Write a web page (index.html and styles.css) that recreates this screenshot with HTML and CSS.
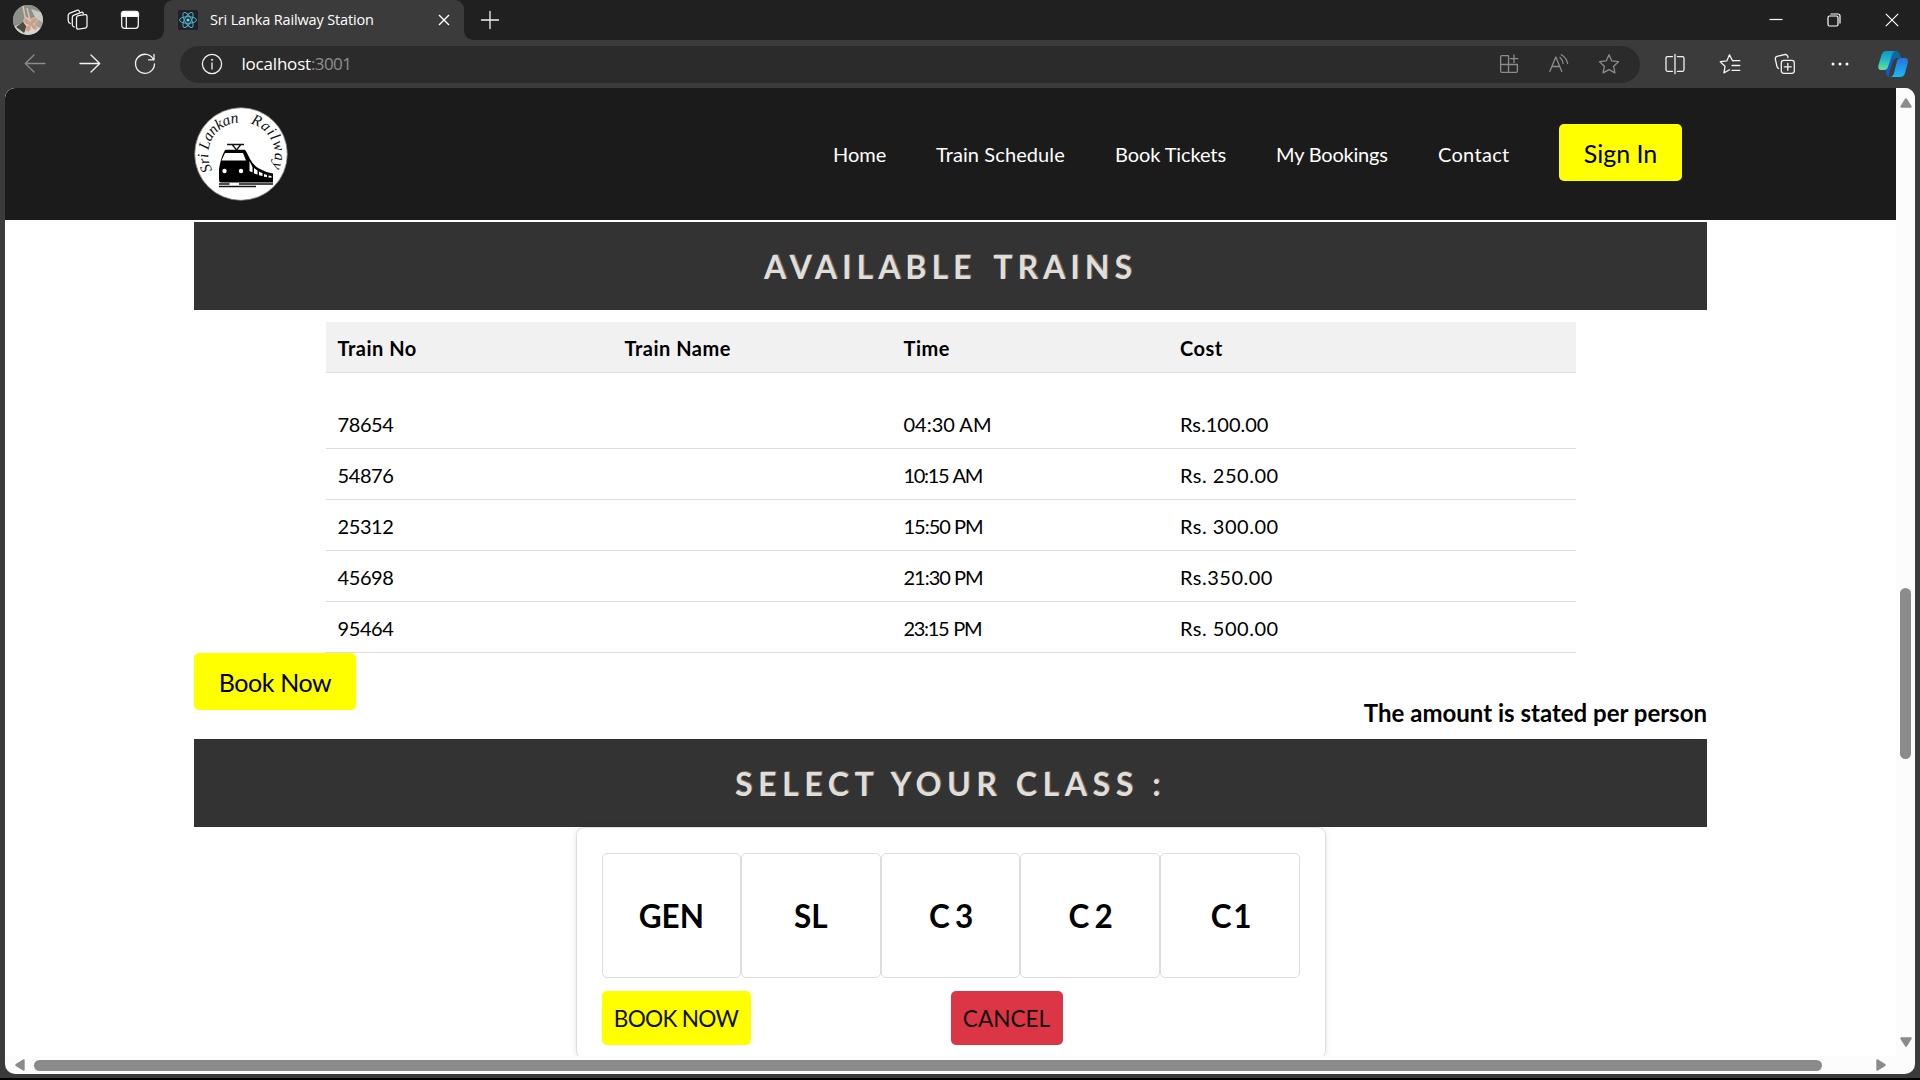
FILE: index.html
```html
<!DOCTYPE html>
<html lang="en">
<head>
<meta charset="utf-8">
<title>Sri Lanka Railway Station</title>
<link rel="stylesheet" href="styles.css">
</head>
<body>
<div class="tabstrip">
  <svg class="avatar" viewBox="0 0 30 30"><defs><clipPath id="face"><circle cx="15" cy="15" r="15"/></clipPath></defs><g clip-path="url(#face)"><rect width="30" height="30" fill="#a9a49a"/><path d="M0 8L10 0H30V10L18 13L6 24L0 20Z" fill="#8d9089"/><path d="M0 22L12 17L30 24V30H0Z" fill="#d8d5d0"/><path d="M18 4L30 8V18L22 12Z" fill="#c9c8c3"/><path d="M3 22L10 17L14 22L11 28Z" fill="#4c4a43"/><path d="M10 1L12 12L17 15L14 3" fill="none" stroke="#dcc3ae" stroke-width="1.5"/><path d="M17 17C13 11 10 13 11 17C12 19 14 20 16 20C12 22 12 26 15 27C18 26 18 23 18 21C20 25 23 26 24 24C25 21 22 20 20 19C24 18 26 15 24 13C21 12 18 14 17 17Z" fill="#c9a18a" stroke="#e3cbb9" stroke-width=".8"/></g></svg>
  <svg class="ico workspaces" viewBox="0 0 24 24"><rect x="10.5" y="7" width="10.5" height="13.5" rx="2" transform="skewY(-9) translate(0 2.6)"/><path d="M8.2 19L7.300 18.500Q6.300 18 6.300 16.500V9.500Q6.300 7.800 8 7.200L16 4.200Q17 4 17.300 5.500M4.400 15.500Q2.200 14.800 2.200 12.500V7.500Q2.200 5.800 3.900 5.100L11.500 2.200Q13 1.800 13.300 3.500"/></svg>
  <svg class="ico tabmenu" viewBox="0 0 24 24"><rect x="3.700" y="3.700" width="16.600" height="16.600" rx="3"/><path d="M3.500 5.500Q4 3.500 6 3.500H18Q20 3.500 20.500 5.500V8.300H3.500Z" fill="#fff"/><path d="M8.300 8V20"/></svg>
  <div class="tab">
    <svg class="react" viewBox="0 0 20 20"><rect width="20" height="20" rx="1.500" fill="#1f2126"/><g fill="none" stroke="#4fb3cb" stroke-width="1"><ellipse cx="10" cy="10" rx="8.500" ry="3.300"/><ellipse cx="10" cy="10" rx="8.500" ry="3.300" transform="rotate(60 10 10)"/><ellipse cx="10" cy="10" rx="8.500" ry="3.300" transform="rotate(120 10 10)"/></g><circle cx="10" cy="10" r="1.600" fill="#61dafb"/></svg>
    <span class="tab-title">Sri Lanka Railway Station</span>
    <svg class="tab-close" viewBox="0 0 12 12"><path d="M1 1L11 11M11 1L1 11"/></svg>
  </div>
  <svg class="ico newtab" viewBox="0 0 24 24"><path d="M3.500 12H20.500M12 3.500V20.500"/></svg>
  <div class="winctl">
    <svg viewBox="0 0 14 14"><path d="M.5 6.500H13.500"/></svg>
    <svg viewBox="0 0 14 14"><rect x="1" y="3" width="10" height="10" rx="1.500"/><path d="M3.500 1H11Q13 1 13 3V10.500"/></svg>
    <svg viewBox="0 0 14 14"><path d="M.8 .8L13.200 13.200M13.200 .8L.8 13.200"/></svg>
  </div>
</div>
<div class="toolbar">
  <svg class="ico dim" viewBox="0 0 24 24"><path d="M22 11.500H2.500M11 3L2.300 11.500L11 20"/></svg>
  <svg class="ico" viewBox="0 0 24 24"><path d="M2 11.500H21.500M13 3L21.700 11.500L13 20"/></svg>
  <svg class="ico" viewBox="0 0 24 24"><path d="M20.500 7.500A9.500 9.500 0 1 0 21.500 12M21 2.500V7.800H15.500"/></svg>
  <div class="address">
    <svg class="ico" viewBox="0 0 24 24"><circle cx="12" cy="12" r="9.600"/><path d="M12 11V17"/><circle cx="12" cy="7.800" r=".7" fill="#fff" stroke-width=".6"/></svg>
    <span class="url"><span class="host">localhost</span><span class="port">:3001</span></span>
    <svg class="ico dim apps" viewBox="0 0 24 24"><path d="M11.500 3.700H5Q3.600 3.700 3.600 5V19Q3.600 20.400 5 20.400H19Q20.400 20.400 20.400 19V12.500H3.600M11.500 3.700V20.400M17 3V10.500M13.300 6.700H20.800"/></svg>
    <svg class="ico dim" viewBox="0 0 24 24"><path d="M2.800 19.500L8.800 5L14.800 19.500M5 14.500H12.500M13 5.500Q15.800 8 16 11.500M14.300 2.800Q19.500 5.800 20.600 11.500"/></svg>
    <svg class="ico dim" viewBox="0 0 24 24"><path d="M12 2.800L14.800 8.900L21.500 9.700L16.600 14.200L17.900 20.900L12 17.600L6.100 20.900L7.400 14.200L2.500 9.700L9.200 8.900Z"/></svg>
  </div>
  <svg class="ico split" viewBox="0 0 24 24"><path d="M9.500 4.700H4.500Q3 4.700 3 6.200V17.800Q3 19.300 4.500 19.300H9.500M14.500 4.700H19.500Q21 4.700 21 6.200V17.800Q21 19.300 19.500 19.300H14.500M12 2.300V21.700"/></svg>
  <svg class="ico" viewBox="0 0 24 24"><path d="M15.500 8.900L14.500 8.700L11.500 2.800L8.800 8.900L2.300 9.700L7 14.300L5.900 20.900L11.500 17.800M14.500 8.700H21.800M14 13.500H21.800M14 18.300H21.800"/></svg>
  <svg class="ico" viewBox="0 0 24 24"><rect x="8.300" y="8.300" width="13" height="13" rx="2.500"/><path d="M14.800 11.300V18.300M11.300 14.800H18.300M5.600 16.500Q4.300 16 4 14.500L2.300 7Q2 5 4 4.300L12 2.500Q14 2.300 14.700 4.200L15 5.500"/></svg>
  <svg class="ico" viewBox="0 0 24 24"><g fill="#fff" stroke="none"><circle cx="5" cy="12" r="1.500"/><circle cx="12" cy="12" r="1.500"/><circle cx="19" cy="12" r="1.500"/></g></svg>
  <svg class="copilot" viewBox="0 0 30 28"><defs><linearGradient id="ga" x1="0" y1="0" x2="0" y2="1"><stop offset="0" stop-color="#1395c8"/><stop offset=".5" stop-color="#24bcc4"/><stop offset="1" stop-color="#6ee08e"/></linearGradient><linearGradient id="gb" x1="0" y1="0" x2="0" y2="1"><stop offset="0" stop-color="#2a6fe0"/><stop offset="1" stop-color="#15bdf5"/></linearGradient></defs><path d="M8 1H17Q21 1 22 5L23 8H19Q16 8 15 11L11 24Q10 27 13 27H12Q8 27 8 22L7 20Z" fill="#1458c8"/><path d="M14 1H17Q21 1 22 5L23 8H19Q16.500 8 15.500 11Z" fill="#0f6a9c"/><path d="M8 1H18Q15 1 14 5L10 17Q9 20 6 20H3Q-.5 20 .5 15L3.500 5Q5 1 8 1Z" fill="url(#ga)"/><path d="M22 27H12Q15 27 16 23L19 11Q20 8 23 8H27Q30.500 8 29.700 13L27 23Q26 27 22 27Z" fill="url(#gb)"/></svg>
</div>
<div class="window">
  <main class="page">
    <header class="navbar">
      <svg class="logo" viewBox="0 0 94 94"><defs><path id="arcL" d="M18.500 63A31.500 31.500 0 0 1 53 16.500"/><path id="arcR" d="M56.500 16.500A32 32 0 0 1 75 66"/></defs><circle cx="47" cy="47" r="46.300" fill="#fff" stroke="#777" stroke-width=".8"/><g class="script"><text><textPath href="#arcL" textLength="65">Sri Lankan</textPath></text><text><textPath href="#arcR" textLength="56">Railway</textPath></text></g><path d="M31.500 43.500H51M33 37.500H50M38.500 38L42.500 43L46.500 38" fill="none" stroke="#111" stroke-width="1.300"/><path d="M32 43H50Q52 43 52.500 45L56 52Q59 58 65 61.500Q71 65 79 66.500V75.500H27Q25 75.500 25 73V62Q26.500 52 30 45Q30.500 43 32 43Z"/><path d="M31 46H49L52 53.500H27.500Z" fill="#fff"/><path d="M55.500 54L58.500 60V65.500L55.500 64ZM60 61L63.500 63.500V67.500L60 66.500ZM65 64.500L68.500 66.300V69L65 68.300ZM70 67L73 68V70L70 69.700ZM74.500 68.500L77.500 69V70.800L74.500 70.500Z" fill="#fff"/><circle cx="30.500" cy="64" r="2.200" fill="#fff"/><circle cx="47" cy="64" r="2.200" fill="#fff"/><path d="M25 77H79M25 79.500H62" stroke="#111" stroke-width="1.600"/><path d="M35.500 76H45V78H35.500Z" fill="#fff"/></svg>
      <nav class="links">
        <a class="n1">Home</a><a class="n2">Train Schedule</a><a class="n3">Book Tickets</a><a class="n4">My Bookings</a><a class="n5">Contact</a>
        <button class="btn signin">Sign In</button>
      </nav>
    </header>
    <section class="content">
      <h2 class="banner"><span class="b1">AVAILABLE TRAINS</span></h2>
      <table class="trains">
        <thead><tr><th class="no">Train No</th><th class="name">Train Name</th><th class="time">Time</th><th class="cost">Cost</th></tr></thead>
        <tbody>
          <tr class="blank"><td colspan="4"></td></tr>
          <tr><td class="no">78654</td><td></td><td>04:30 AM</td><td>Rs.100.00</td></tr>
          <tr><td class="no">54876</td><td></td><td class="tighter">10:15 AM</td><td class="wide">Rs. 250.00</td></tr>
          <tr><td class="no">25312</td><td></td><td class="tight">15:50 PM</td><td class="wide">Rs. 300.00</td></tr>
          <tr><td class="no">45698</td><td></td><td class="tight">21:30 PM</td><td class="wide">Rs.350.00</td></tr>
          <tr><td class="no">95464</td><td></td><td class="tighter">23:15 PM</td><td class="wide">Rs. 500.00</td></tr>
        </tbody>
      </table>
      <div class="below">
        <button class="btn book">Book Now</button>
        <p class="note">The amount is stated per person</p>
      </div>
      <h2 class="banner"><span class="b2">SELECT YOUR CLASS :</span></h2>
      <div class="card">
        <div class="classes"><div>GEN</div><div>SL</div><div class="c3">C 3</div><div class="c3">C 2</div><div class="c1">C 1</div></div>
        <div class="actions"><div><button class="act go">BOOK NOW</button></div><div><button class="act stop">CANCEL</button></div></div>
      </div>
    </section>
  </main>
  <div class="vbar"><svg viewBox="0 0 12 10"><path d="M5 .8Q6 -.3 7 .8L11.500 8Q12 9.500 11 9.700H1Q0 9.500 .5 8Z"/></svg><i></i><svg viewBox="0 0 12 10"><path d="M5 9.200Q6 10.300 7 9.200L11.500 2Q12 .5 11 .3H1Q0 .5 .5 2Z"/></svg></div>
  <div class="hbar"><svg viewBox="0 0 10 12"><path d="M.8 5Q-.3 6 .8 7L8 11.500Q9.500 12 9.700 11V1Q9.500 0 8 .5Z"/></svg><i></i><svg viewBox="0 0 10 12"><path d="M9.200 5Q10.300 6 9.200 7L2 11.500Q.5 12 .3 11V1Q.5 0 2 .5Z"/></svg></div>
</div>
</body>
</html>
```
FILE: styles.css
```css
* { box-sizing: border-box; }
body {
  margin: 0;
  width: 1920px;
  height: 1080px;
  overflow: hidden;
  background: #3b3b3b;
  border-bottom: 2px solid #000;
  font-family: Lato, sans-serif;
  color: #000;
}
svg { display: block; flex: none; }

/* browser chrome */
.tabstrip { display: flex; align-items: center; height: 40px; background: #202020; font-family: "Open Sans", sans-serif; }
.ico { width: 24px; height: 24px; fill: none; stroke: #f2f2f2; stroke-width: 1.3; stroke-linecap: round; stroke-linejoin: round; }
.dim { stroke: #8c8c8c; }
.avatar { width: 30px; height: 30px; margin-left: 13px; }
.workspaces { margin-left: 23px; }
.tabmenu { margin-left: 28px; }
.tab { position: relative; display: flex; align-items: center; width: 300px; height: 40px; margin-left: 22px; padding-left: 14px; background: #3b3b3b; border-radius: 9px 9px 0 0; color: #fff; }
.tab::before, .tab::after { content: ""; position: absolute; bottom: 0; width: 9px; height: 9px; }
.tab::before { left: -9px; background: radial-gradient(circle at 0 0, #202020 8.500px, #3b3b3b 9px); }
.tab::after { right: -9px; background: radial-gradient(circle at 100% 0, #202020 8.500px, #3b3b3b 9px); }
.react { width: 20px; height: 20px; }
.tab-title { flex: 1; margin: 0 0 1px 12px; font-size: 14.500px; line-height: 20px; letter-spacing: -.15px; white-space: nowrap; }
.tab-close { width: 12px; height: 12px; margin-right: 14px; fill: none; stroke: #fff; stroke-width: 1.4; }
.newtab { margin-left: 14px; }
.winctl { display: flex; gap: 44px; margin: 0 21.500px 0 auto; }
.winctl svg { width: 14px; height: 14px; fill: none; stroke: #fff; stroke-width: 1.2; }

.toolbar { display: flex; align-items: center; gap: 31px; height: 48px; padding-left: 23px; font-family: "Open Sans", sans-serif; }
.address { display: flex; align-items: center; width: 1460px; height: 37px; margin: 0 -8.500px 0 -8px; padding: 0 19px 0 20px; border-radius: 19px; background: #2b2b2b; }
.url { margin: 0 0 1px 17.500px; font-size: 17px; line-height: 24px; }
.host { color: #fff; letter-spacing: -.2px; }
.port { color: #8f8f8f; letter-spacing: -.6px; }
.apps { margin-left: auto; }
.address .dim + .dim { margin-left: 26px; }
.copilot { width: 30px; height: 28px; margin-left: -5px; }

/* page viewport with its scrollbars */
.window { display: grid; grid-template: 968px 18px / 1891px 19px; width: 1910px; margin-left: 5px; overflow: hidden; border-radius: 10px; background: #fcfcfc; }
.page { overflow: hidden; background: #fff; }
.vbar { display: flex; flex-direction: column; align-items: center; padding: 10px 0 9px; background: #fcfcfc; }
.vbar svg { width: 12px; height: 10px; fill: #8b8b8b; }
.vbar i { width: 11px; height: 171px; margin: 480px 0 auto; border-radius: 6px; background: #8b8b8b; }
.hbar { display: flex; align-items: center; padding: 0 10px 0 10px; }
.hbar svg { width: 10px; height: 12px; fill: #8b8b8b; }
.hbar i { width: 1788px; height: 11px; margin: 0 auto 0 9px; border-radius: 6px; background: #8b8b8b; }

.navbar { display: flex; align-items: center; justify-content: space-between; height: 132px; padding: 0 214px 0 189px; background: #1b1b1b; }
.logo { width: 94px; height: 94px; }
.script { font: italic 15.500px "Liberation Serif", serif; fill: #111; }
.links { display: flex; align-items: center; gap: 50px; color: #fff; font-size: 20px; line-height: 25px; white-space: nowrap; }
.links a { padding-top: 1px; }
.n1 { width: 53px; }
.n2 { width: 129px; letter-spacing: .1px; }
.n3 { width: 111px; letter-spacing: -.1px; }
.n4 { width: 112px; letter-spacing: -.2px; }
.n5 { width: 71px; letter-spacing: .3px; }
.btn { height: 57px; padding: 0; border: 0; border-radius: 5px; background: #ff0; color: #000; font: 25px/31px Lato, sans-serif; white-space: nowrap; }
.signin { width: 123px; margin-bottom: 3px; padding-top: 1px; }

.content { padding: 2px 189px 0; }
.banner { display: flex; align-items: center; justify-content: center; height: 88px; margin: 0; background: #333; color: #e0deda; font-size: 32px; line-height: 40px; font-weight: 700; text-shadow: 1px -1px 0 rgba(190, 165, 140, .45); white-space: nowrap; }
.b1 { letter-spacing: 5px; word-spacing: 5px; margin-top: 1px; }
.b2 { letter-spacing: 5.600px; margin-top: 2px; }
.trains { width: 1250px; margin: 12px auto 0; border-collapse: separate; border-spacing: 0; table-layout: fixed; font-size: 20px; line-height: 26px; }
.trains th, .trains td { height: 51px; padding: 1px 12px 0; border-bottom: 1px solid #ddd; text-align: left; white-space: nowrap; }
.trains th { background: #f1f1f1; letter-spacing: .5px; }
.trains .blank td { height: 25px; border: 0; }
.trains th.no { width: 287px; }
.trains td.no { letter-spacing: -.4px; }
.trains th.name { width: 279px; }
.trains th.time { width: 276.500px; }
.trains .tight { letter-spacing: -1px; }
.trains .tighter { letter-spacing: -1.300px; word-spacing: 1px; }
.trains .wide { letter-spacing: .5px; }
.below { display: flex; justify-content: space-between; height: 86px; }
.book { width: 162px; letter-spacing: -.4px; padding-top: 1px; }
.note { margin: 45px 0 0; font-size: 24px; line-height: 30px; font-weight: 700; white-space: nowrap; }
.card { width: 750px; height: 232px; margin: 0 auto; padding: 25px; border: 1px solid #ddd; border-radius: 8px; box-shadow: 0 0 6px rgba(0, 0, 0, .1); }
.classes { display: grid; grid-template-columns: repeat(5, 1fr); height: 125px; font-size: 31.500px; font-weight: 700; white-space: nowrap; }
.classes div { display: flex; align-items: center; justify-content: center; padding-top: 1px; border: 1px solid #ddd; border-radius: 5px; }
.classes .c3 { letter-spacing: -1.200px; }
.classes .c1 { letter-spacing: -3px; }
.actions { display: grid; grid-template-columns: 1fr 1fr; margin-top: 13px; }
.act { height: 54px; padding: 2px 0 0; border: 0; border-radius: 5px; color: #111; font: 22.600px/30px Lato, sans-serif; white-space: nowrap; }
.go { width: 149px; background: #ff0; letter-spacing: -.7px; }
.stop { width: 112px; background: #dc3545; }
```
